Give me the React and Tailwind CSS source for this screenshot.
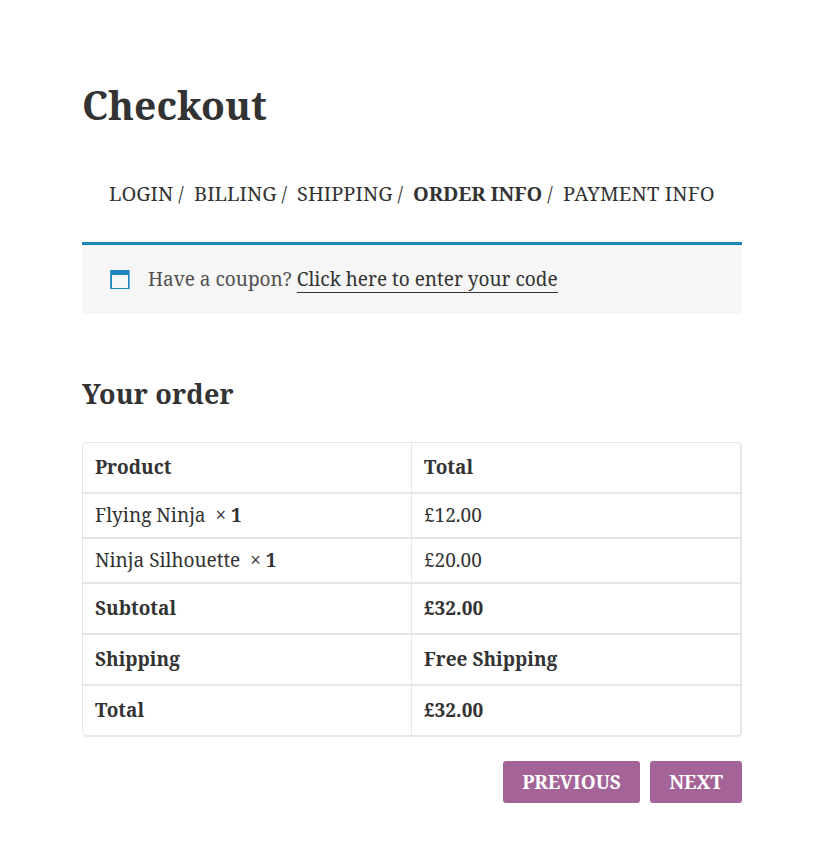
const steps = [
  { label: "LOGIN", box: "w-[85px]", fit: "tracking-[0px]" },
  { label: "BILLING", box: "w-[103px]", fit: "tracking-[0.05px]" },
  { label: "SHIPPING", box: "w-[116px]", fit: "tracking-[0.05px]" },
  { label: "ORDER INFO", box: "w-[150px]", fit: "font-bold tracking-[-0.05px]" },
  { label: "PAYMENT INFO", box: "w-[153px]", fit: "tracking-[0.2px]" },
];

const items = [
  { name: "Flying Ninja", qty: 1, price: "£12.00" },
  { name: "Ninja Silhouette", qty: 1, price: "£20.00" },
];

const totals = [
  { label: "Subtotal", value: "£32.00" },
  { label: "Shipping", value: "Free Shipping" },
  { label: "Total", value: "£32.00" },
];

function Row({ left, right, className }) {
  return (
    <div className={`flex border-b-2 border-[#e6e6e6] ${className}`}>
      <div className="flex w-[329px] items-center border-r border-[#e9e9e9] pl-3 whitespace-pre">{left}</div>
      <div className="flex flex-1 items-center pl-3">{right}</div>
    </div>
  );
}

function Button({ children, className }) {
  return (
    <button className={`h-[42px] rounded-[3px] bg-[#a46497] text-[19px] leading-[42px] font-bold text-white ${className}`}>
      {children}
    </button>
  );
}

export default function App() {
  return (
    <div className="min-h-[866px] bg-white px-20 pt-[79px] font-['Noto_Serif','DejaVu_Serif',serif] text-[19px] text-[#333]">
      <main className="ml-0.5 w-[660px]">
        <h1 className="h-[52px] text-[39px] leading-[52px] font-bold">Checkout</h1>

        <nav className="mt-[49px] ml-[27px] flex h-7 text-[20px] leading-7 whitespace-nowrap">
          {steps.map((step, i) => (
            <div key={step.label} className={step.box}>
              <span className={step.fit}>{step.label}</span>
              {i < steps.length - 1 && <span className="pl-[5px] text-[19px]">/</span>}
            </div>
          ))}
        </nav>

        <div className="mt-[34px] flex h-[72px] items-center border-t-[3px] border-[#1e85be] bg-[#f6f6f6] pl-7 text-[#515151]">
          <svg width="20" height="19" viewBox="0 0 20 19">
            <path fill="#1e85be" fillRule="evenodd" d="M0.2 0H19.6V19H0.2ZM2 5V18H18V5Z" />
          </svg>
          <p className="ml-[18px] leading-[25px] whitespace-nowrap">
            Have a coupon? <a className="border-b border-[#333] text-[#333]">Click here to enter your code</a>
          </p>
        </div>

        <h2 className="mt-[62px] h-9 text-[27px] leading-9 font-bold tracking-[0.15px]">Your order</h2>

        <section className="mt-[30px] overflow-hidden rounded-[5px] border-t border-r-2 border-l border-[#e6e6e6]">
          <Row className="h-[51px] font-bold" left="Product" right="Total" />
          {items.map((item) => (
            <Row
              key={item.name}
              className="h-[45px]"
              left={<span>{item.name}&nbsp; × <strong>{item.qty}</strong></span>}
              right={item.price}
            />
          ))}
          {totals.map((row) => (
            <Row key={row.label} className="h-[51px] font-bold last:rounded-b-[4px]" left={row.label} right={row.value} />
          ))}
        </section>

        <div className="mt-6 flex justify-end gap-2.5">
          <Button className="w-[137px]">PREVIOUS</Button>
          <Button className="w-[92px]">NEXT</Button>
        </div>
      </main>
    </div>
  );
}
